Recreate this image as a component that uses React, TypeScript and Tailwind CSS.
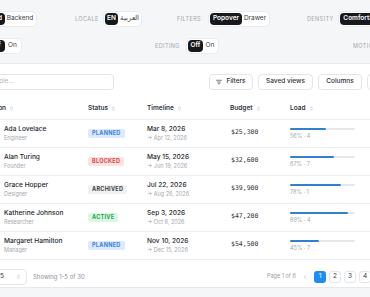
import { ChevronLeft, ChevronsUpDown, ListFilter } from "lucide-react";

type Row = {
  name: string;
  role: string;
  status: "planned" | "blocked" | "archived" | "active";
  start: string;
  end: string;
  budget: string;
  load: number;
  tasks: number;
};

const rows: Row[] = [
  { name: "Ada Lovelace", role: "Engineer", status: "planned", start: "Mar 8, 2026", end: "Apr 12, 2026", budget: "$25,300", load: 56, tasks: 4 },
  { name: "Alan Turing", role: "Founder", status: "blocked", start: "May 15, 2026", end: "Jun 19, 2026", budget: "$32,600", load: 67, tasks: 7 },
  { name: "Grace Hopper", role: "Designer", status: "archived", start: "Jul 22, 2026", end: "Aug 26, 2026", budget: "$39,900", load: 78, tasks: 1 },
  { name: "Katherine Johnson", role: "Researcher", status: "active", start: "Sep 3, 2026", end: "Oct 8, 2026", budget: "$47,200", load: 89, tasks: 4 },
  { name: "Margaret Hamilton", role: "Manager", status: "planned", start: "Nov 10, 2026", end: "Dec 15, 2026", budget: "$54,500", load: 45, tasks: 7 },
];

const badge: Record<Row["status"], string> = {
  planned: "bg-[#dbeafe] text-[#3a7fd6]",
  blocked: "bg-[#fde2e2] text-[#d94545]",
  archived: "bg-[#eff0f2] text-[#3b3f46]",
  active: "bg-[#daf7e2] text-[#27a356]",
};

// Segmented toggle; widths are fixed so the groups line up with the screenshot.
function Segment({ items }: { items: { label: string; w: string; on?: boolean }[] }) {
  return (
    <div className="flex h-[16px] items-center rounded-[5px] border border-[#e9ebef] bg-white p-[1px]">
      {items.map((it) => (
        <span
          key={it.label}
          className={`flex h-[12px] items-center justify-center whitespace-nowrap rounded-[4px] text-[6.5px] ${it.w} ${
            it.on ? "bg-[#16181c] font-semibold text-white" : "text-[#3a3d44]"
          }`}
        >
          {it.label}
        </span>
      ))}
    </div>
  );
}

function Label({ text, className }: { text: string; className: string }) {
  return (
    <span className={`shrink-0 text-[5.5px] uppercase tracking-[0.4px] text-[#a3a7ae] ${className}`}>{text}</span>
  );
}

function SortHead({ text }: { text: string }) {
  return (
    <span className="flex items-center gap-[3px] text-[6.5px] font-semibold text-[#33363c]">
      {text}
      <ChevronsUpDown className="h-[5px] w-[5px] text-[#a3a7ae]" strokeWidth={2.5} />
    </span>
  );
}

function ToolButton({ children, w }: { children: React.ReactNode; w: string }) {
  return (
    <span
      className={`flex h-[16px] shrink-0 items-center justify-center gap-[4px] whitespace-nowrap rounded-[4px] border border-[#e3e5e9] bg-white text-[6.5px] font-medium text-[#2d3036] ${w}`}
    >
      {children}
    </span>
  );
}

export default function App() {
  return (
    <div className="h-[297px] w-[370px] overflow-hidden bg-[#f5f6f8] font-['Inter',sans-serif]">
      <div className="ml-[-60px] w-[500px]">
        {/* Preference toggles */}
        <div className="h-[63px] pt-[11px]">
          <div className="flex items-center">
            <div className="ml-[29px] shrink-0">
              <Segment items={[{ label: "Frontend", w: "w-[34px]", on: true }, { label: "Backend", w: "w-[30px]" }]} />
            </div>
            <Label text="Locale" className="ml-[38px] w-[28px]" />
            <Segment items={[{ label: "EN", w: "w-[13px]", on: true }, { label: "العربية", w: "w-[22px]" }]} />
            <Label text="Filters" className="ml-[35px] w-[31px]" />
            <Segment items={[{ label: "Popover", w: "w-[32px]", on: true }, { label: "Drawer", w: "w-[26px]" }]} />
            <Label text="Density" className="ml-[37px] w-[31px]" />
            <Segment items={[{ label: "Comfortable", w: "w-[46px]", on: true }, { label: "Compact", w: "w-[36px]" }]} />
          </div>
          <div className="mt-[11px] flex items-center">
            <div className="ml-[45px] shrink-0">
              <Segment items={[{ label: "Off", w: "w-[18px]", on: true }, { label: "On", w: "w-[15px]" }]} />
            </div>
            <Label text="Editing" className="ml-[133px] w-[31px]" />
            <Segment items={[{ label: "Off", w: "w-[15px]", on: true }, { label: "On", w: "w-[14px]" }]} />
            <Label text="Motion" className="ml-[134px] w-[30px]" />
          </div>
        </div>

        {/* Table card */}
        <div className="border-y border-[#e6e8eb] bg-white px-[20px]">
          <div className="flex items-center pb-[8px] pt-[10px]">
            <div className="-ml-[4px] flex h-[16px] w-[158px] shrink-0 items-center rounded-[4px] border border-[#e3e5e9] px-[7px] text-[6.5px] text-[#b0b3b9]">
              Search people...
            </div>
            <div className="ml-[95px] flex gap-[5px]">
              <ToolButton w="w-[44px]">
                <ListFilter className="h-[6px] w-[6px]" strokeWidth={2.5} />
                Filters
              </ToolButton>
              <ToolButton w="w-[55px]">Saved views</ToolButton>
              <ToolButton w="w-[44px]">Columns</ToolButton>
              <ToolButton w="w-[40px]">Export</ToolButton>
            </div>
          </div>

          <div className="grid h-[22px] grid-cols-[24px_104px_59px_83px_60px_90px] items-center border-b border-[#eceef1]">
            <span />
            <SortHead text="Person" />
            <SortHead text="Status" />
            <SortHead text="Timeline" />
            <SortHead text="Budget" />
            <SortHead text="Load" />
          </div>

          {rows.map((r) => (
            <div
              key={r.name}
              className="grid h-[28px] grid-cols-[24px_104px_59px_83px_60px_90px] items-center border-b border-[#eceef1]"
            >
              <span />
              <div className="flex items-center gap-[4px]">
                <span className="h-[16px] w-[16px] shrink-0 rounded-full bg-[#e8eaee]" />
                <div>
                  <div className="text-[6.6px] leading-[9px] font-medium text-[#25282e]">{r.name}</div>
                  <div className="text-[5.5px] leading-[8px] text-[#a3a7ae]">{r.role}</div>
                </div>
              </div>
              <div className="flex items-center">
                <span
                  className={`flex h-[9px] items-center rounded-[2px] px-[4px] text-[5.5px] leading-none font-bold uppercase tracking-[0.3px] ${badge[r.status]}`}
                >
                  {r.status}
                </span>
              </div>
              <div>
                <div className="text-[6.6px] leading-[9px] font-medium text-[#25282e]">{r.start}</div>
                <div className="text-[5.5px] leading-[8px] text-[#a3a7ae]">→ {r.end}</div>
              </div>
              <div className="pl-[1px] pb-[2px] font-['DejaVu_Sans_Mono',monospace] text-[6.5px] text-[#33363c]">{r.budget}</div>
              <div>
                <div className="h-[2px] w-[65px] rounded-full bg-[#e6e8eb]">
                  <div className="h-[2px] rounded-full bg-[#2f7fd2]" style={{ width: `${r.load}%` }} />
                </div>
                <div className="mt-[3px] text-[5.5px] leading-[6px] text-[#a3a7ae]">
                  {r.load}% · {r.tasks}
                </div>
              </div>
            </div>
          ))}

          {/* Footer / pagination */}
          <div className="flex h-[27px] items-center pt-[6px]">
            <div className="flex w-[307px] shrink-0 items-center">
              <span className="w-[30px] text-[6.5px] text-[#8e929a]">Rows</span>
              <span className="ml-[4px] flex h-[16px] w-[33px] items-center justify-between rounded-[4px] border border-[#e3e5e9] px-[5px] text-[6.5px] text-[#33363c]">
                5
                <ChevronsUpDown className="h-[5px] w-[5px] text-[#a3a7ae]" strokeWidth={2.5} />
              </span>
              <span className="ml-[6px] whitespace-nowrap text-[6px] text-[#8e929a]">Showing 1-5 of 30</span>
            </div>
            <span className="w-[31px] shrink-0 whitespace-nowrap text-[5.5px] text-[#9a9ea6]">Page 1 of 6</span>
            <span className="ml-[1px] flex h-[12px] w-[12px] shrink-0 items-center justify-center text-[#b9bcc2]">
              <ChevronLeft className="h-[6px] w-[6px]" strokeWidth={2.5} />
            </span>
            {[1, 2, 3, 4, 5].map((p) => (
              <span
                key={p}
                className={`ml-[3px] flex h-[12px] w-[12px] shrink-0 items-center justify-center rounded-[3px] text-[6.5px] ${
                  p === 1 ? "bg-[#1d8ef0] text-white" : "border border-[#e3e5e9] text-[#33363c]"
                }`}
              >
                {p}
              </span>
            ))}
          </div>
        </div>
      </div>
    </div>
  );
}
